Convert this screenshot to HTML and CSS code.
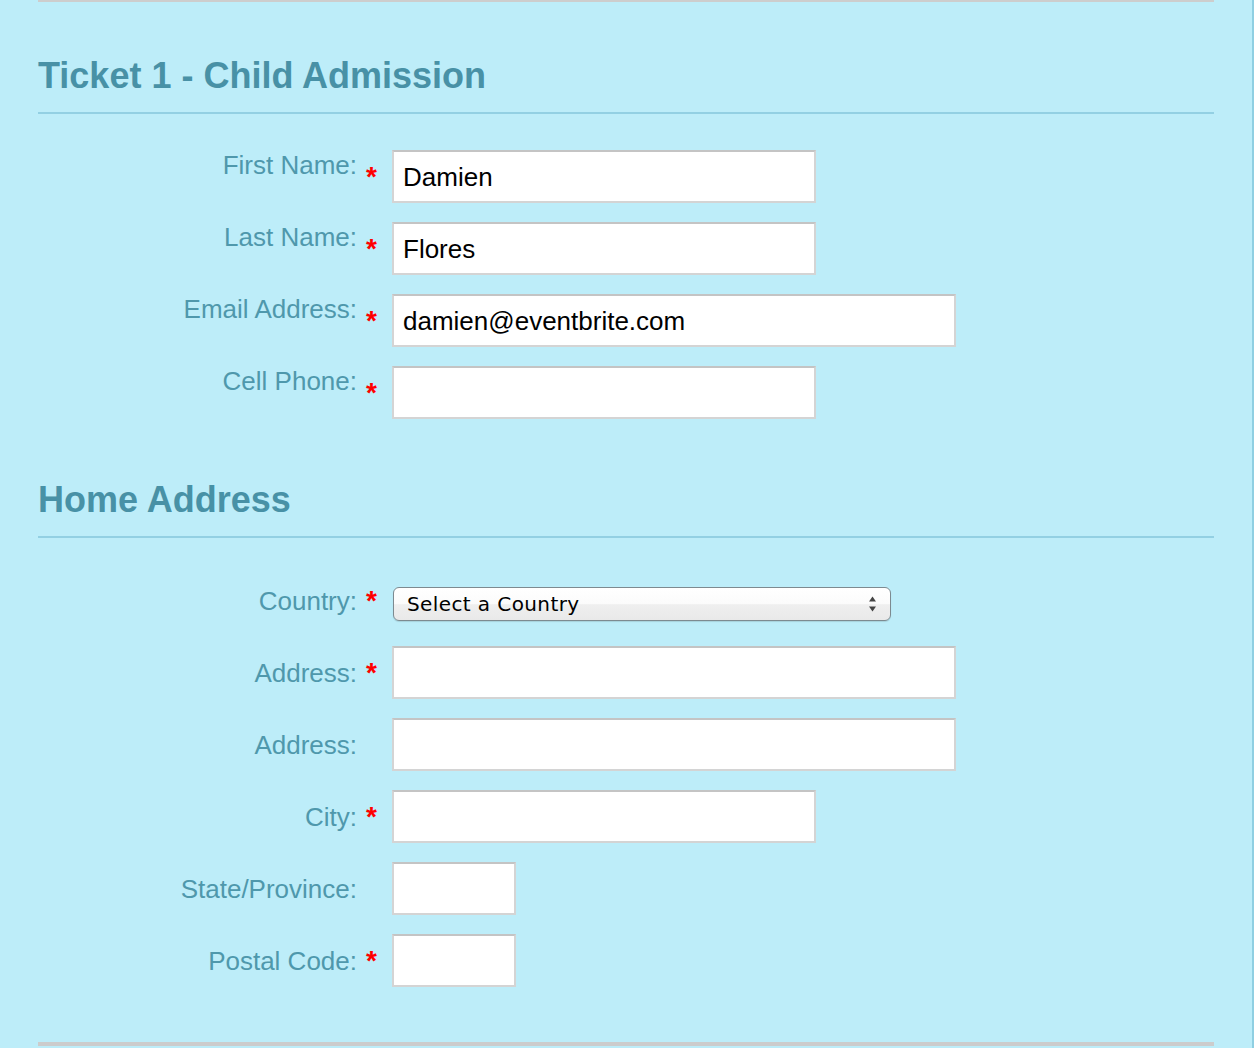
FILE: index.html
```html
<!DOCTYPE html>
<html lang="en">
<head>
<meta charset="utf-8">
<title>Ticket 1 - Child Admission</title>
<link rel="stylesheet" href="styles.css">
</head>
<body>
<div class="page">
  <form class="form">
    <section class="section section-contact">
      <h2 class="section-title">Ticket 1 - Child Admission</h2>
      <div class="rows">
        <div class="row">
          <label class="label">First Name:</label>
          <span class="req">*</span>
          <input class="field field-md" type="text" value="Damien">
        </div>
        <div class="row">
          <label class="label">Last Name:</label>
          <span class="req">*</span>
          <input class="field field-md" type="text" value="Flores">
        </div>
        <div class="row">
          <label class="label">Email Address:</label>
          <span class="req">*</span>
          <input class="field field-lg" type="text" value="damien@eventbrite.com">
        </div>
        <div class="row">
          <label class="label">Cell Phone:</label>
          <span class="req">*</span>
          <input class="field field-md" type="text" value="">
        </div>
      </div>
    </section>
    <section class="section section-address">
      <h2 class="section-title">Home Address</h2>
      <div class="rows">
        <div class="row">
          <label class="label">Country:</label>
          <span class="req">*</span>
          <div class="select">
            <span class="select-text">Select a Country</span>
            <svg class="select-arrows" width="9" height="16" viewBox="0 0 9 16"><path d="M4.5 0.5 L8 5.5 L1 5.5 Z" fill="#444"/><path d="M1 10.5 L8 10.5 L4.5 15.5 Z" fill="#444"/></svg>
          </div>
        </div>
        <div class="row">
          <label class="label">Address:</label>
          <span class="req">*</span>
          <input class="field field-lg" type="text" value="">
        </div>
        <div class="row">
          <label class="label">Address:</label>
          <span class="req"></span>
          <input class="field field-lg" type="text" value="">
        </div>
        <div class="row">
          <label class="label">City:</label>
          <span class="req">*</span>
          <input class="field field-md" type="text" value="">
        </div>
        <div class="row">
          <label class="label">State/Province:</label>
          <span class="req"></span>
          <input class="field field-sm" type="text" value="">
        </div>
        <div class="row">
          <label class="label">Postal Code:</label>
          <span class="req">*</span>
          <input class="field field-sm" type="text" value="">
        </div>
      </div>
    </section>
  </form>
</div>
</body>
</html>
```
FILE: styles.css
```css
html, body {
  margin: 0;
  padding: 0;
  background: #bdedf9;
}

.page {
  width: 1252px;
  min-height: 1048px;
  border-right: 2px solid #8fcfe2;
  font-family: "Liberation Sans", Arial, Helvetica, sans-serif;
}

.form {
  margin: 0 0 0 38px;
  width: 1176px;
  border-top: 2px solid #cdcdcd;
  border-bottom: 4px solid #cccccc;
  padding-bottom: 48px;
}

.section-title {
  margin: 0;
  padding: 52px 0 14px;
  font-size: 36px;
  line-height: 44px;
  font-weight: bold;
  color: #4891a6;
  border-bottom: 2px solid #93d0e3;
}

.rows {
  display: flex;
  flex-direction: column;
  gap: 19px;
  padding: 36px 0 7px;
}

.row {
  display: grid;
  grid-template-columns: 319px 35px auto;
  align-items: start;
  min-height: 53px;
}

.label {
  font-size: 26px;
  line-height: 30px;
  color: #4f98ac;
  text-align: right;
}

.section-address .label {
  padding-top: 12px;
}

.req {
  color: #ff0000;
  font-weight: bold;
  font-size: 28px;
  line-height: 28px;
  padding: 13px 0 0 9px;
}

.field {
  box-sizing: border-box;
  height: 53px;
  margin: 0;
  padding: 1px 10px 0 9px;
  font-family: "Liberation Sans", Arial, Helvetica, sans-serif;
  font-size: 26px;
  color: #000;
  background: #fff;
  border: 2px solid #d4d4d4;
  border-top-color: #c4c4c4;
  border-radius: 0;
  outline: none;
}

.field-md { width: 424px; }
.field-lg { width: 564px; }
.field-sm { width: 124px; }

.select {
  box-sizing: border-box;
  margin-top: 13px;
  margin-left: 1px;
  width: 498px;
  height: 34px;
  display: flex;
  align-items: center;
  justify-content: space-between;
  padding: 0 13px 0 13px;
  border: 1px solid #7d8a90;
  border-radius: 6px;
  background: linear-gradient(#ffffff 0%, #fbfbfb 50%, #efefef 52%, #e9e9e9 100%);
  box-shadow: 0 1px 1px rgba(0, 0, 0, 0.12);
}

.select-text {
  font-family: "DejaVu Sans", "Liberation Sans", sans-serif;
  font-size: 20px;
  letter-spacing: 0.4px;
  color: #000;
  line-height: 24px;
  padding-top: 0;
}

.select-arrows {
  display: block;
}
```
